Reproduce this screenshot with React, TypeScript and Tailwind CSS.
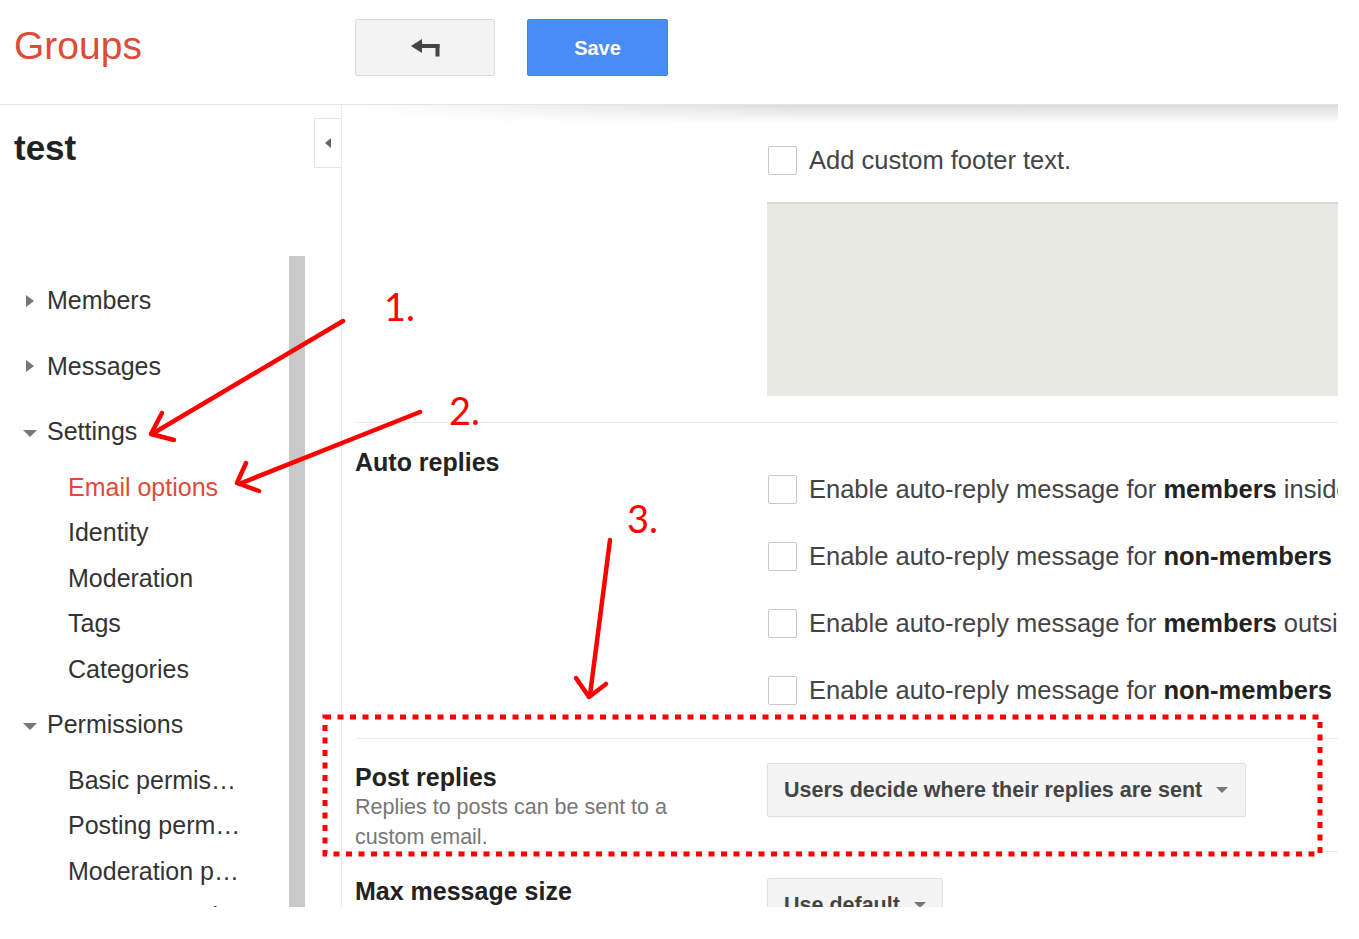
import React from "react";

function RightTri() {
  return (
    <svg width="8" height="12" viewBox="0 0 8 12" className="shrink-0">
      <polygon points="0,0 8,6 0,12" fill="#777" />
    </svg>
  );
}

function DownTri() {
  return (
    <svg width="14" height="7" viewBox="0 0 14 7" className="shrink-0 mt-[3px]">
      <polygon points="0,0 14,0 7,7" fill="#777" />
    </svg>
  );
}

function Caret() {
  return (
    <svg width="12" height="6" viewBox="0 0 12 6" className="shrink-0">
      <polygon points="0,0 12,0 6,6" fill="#777" />
    </svg>
  );
}

function Checkbox() {
  return <div className="ml-[1px] h-[29px] w-[29px] shrink-0 rounded-[2px] border border-[#c8c8c8] bg-white" />;
}

function TopItem({ label, open }: { label: string; open?: boolean }) {
  return (
    <div className={`flex h-[65.5px] items-center ${open ? "pl-[23px] gap-[10px]" : "pl-[26px] gap-[13px]"}`}>
      {open ? <DownTri /> : <RightTri />}
      <span className="text-[25px] text-[#333] whitespace-nowrap">{label}</span>
    </div>
  );
}

function SubItem({ label, active }: { label: string; active?: boolean }) {
  return (
    <div className="flex h-[45.5px] items-center pl-[68px]">
      <span className={`text-[25px] whitespace-nowrap ${active ? "text-[#dd4b39]" : "text-[#333]"}`}>{label}</span>
    </div>
  );
}

function AutoRow({ pre, bold, post }: { pre: string; bold: string; post: string }) {
  return (
    <div className="flex h-[67px] items-center gap-[12px] whitespace-nowrap">
      <Checkbox />
      <span className="text-[25.5px] text-[#444]">
        {pre}
        <b className="font-bold text-[#222]">{bold}</b>
        {post}
      </span>
    </div>
  );
}

export default function App() {
  return (
    <div className="h-[939px] w-[1359px] overflow-hidden bg-white font-['Liberation_Sans',Arial,sans-serif]">
      <div className="relative flex h-[907px] w-[1338px] flex-col overflow-hidden bg-white">
        {/* Header */}
        <header className="flex h-[105px] shrink-0 border-b border-[#e5e5e5]">
          <div className="w-[355px] pl-[14px] pt-[26px]">
            <span className="text-[39px] leading-none text-[#dd4b39]">Groups</span>
          </div>
          <div className="flex gap-[32px] pt-[19px]">
            <button className="flex h-[57px] w-[140px] items-center justify-center rounded-[2px] border border-[#dcdcdc] bg-[#f3f3f3]">
              <svg width="29" height="18" viewBox="0 0 29 18">
                <polygon points="0,7 11,0 11,14" fill="#444" />
                <rect x="10" y="5" width="18.5" height="4" fill="#444" />
                <rect x="24.5" y="5" width="4" height="12.5" fill="#444" />
              </svg>
            </button>
            <button className="flex h-[57px] w-[141px] items-center justify-center rounded-[2px] border border-[#3f83ee] bg-[#4a8cf6] text-[20px] font-bold text-white">
              Save
            </button>
          </div>
        </header>

        <div className="flex min-h-0 flex-1">
          {/* Sidebar */}
          <aside className="flex w-[342px] shrink-0 flex-col overflow-hidden border-r border-[#ebebeb]">
            <div className="flex h-[151px] shrink-0 items-start justify-between">
              <div className="pl-[14px] pt-[25px] text-[35px] font-bold leading-none text-[#222]">test</div>
              <div className="mt-[13px] -mr-[1px] flex h-[50px] w-[28px] items-center justify-center border border-[#e5e5e5] bg-white">
                <svg width="6" height="10" viewBox="0 0 6 10">
                  <polygon points="6,0 0,5 6,10" fill="#666" />
                </svg>
              </div>
            </div>
            <div className="flex min-h-0 flex-1">
              <nav className="w-[289px] shrink-0 overflow-hidden pt-[12px]">
                <TopItem label="Members" />
                <TopItem label="Messages" />
                <TopItem label="Settings" open />
                <SubItem label="Email options" active />
                <SubItem label="Identity" />
                <SubItem label="Moderation" />
                <SubItem label="Tags" />
                <SubItem label="Categories" />
                <TopItem label="Permissions" open />
                <SubItem label="Basic permis…" />
                <SubItem label="Posting perm…" />
                <SubItem label="Moderation p…" />
                <SubItem label="Access permi…" />
              </nav>
              <div className="w-[16px] shrink-0 bg-[#c9c9c9]" />
            </div>
          </aside>

          {/* Main */}
          <main className="relative min-w-0 flex-1 overflow-hidden pl-[13px]">
            <div className="pointer-events-none absolute inset-x-0 top-0 h-[18px] bg-gradient-to-b from-[#dcdcdc] to-transparent [mask-image:linear-gradient(to_right,transparent,black_45%)]" />

            {/* Footer text section */}
            <section className="flex pb-[26px]">
              <div className="w-[412px] shrink-0" />
              <div className="min-w-0 flex-1 pt-[40px]">
                <div className="flex h-[30px] items-center gap-[12px] whitespace-nowrap">
                  <Checkbox />
                  <span className="text-[25.5px] text-[#444]">Add custom footer text.</span>
                </div>
                <div className="mt-[27px] h-[194px] border-t-2 border-[#d8d8d2] bg-[#e9e9e3]" />
              </div>
            </section>

            {/* Auto replies */}
            <section className="flex border-t border-[#ebebeb] pb-[14px]">
              <div className="w-[412px] shrink-0 pt-[24px]">
                <h2 className="text-[25px] font-bold leading-[30px] text-[#222]">Auto replies</h2>
              </div>
              <div className="min-w-0 flex-1 pt-[33px]">
                <AutoRow pre="Enable auto-reply message for " bold="members" post=" inside the domain" />
                <AutoRow pre="Enable auto-reply message for " bold="non-members" post=" inside the domain" />
                <AutoRow pre="Enable auto-reply message for " bold="members" post=" outside the domain" />
                <AutoRow pre="Enable auto-reply message for " bold="non-members" post=" outside the domain" />
              </div>
            </section>

            {/* Post replies */}
            <section className="flex h-[113px] border-t border-[#ebebeb]">
              <div className="w-[412px] shrink-0 pt-[23px]">
                <h2 className="text-[25px] font-bold leading-[30px] text-[#222]">Post replies</h2>
                <p className="w-[340px] text-[21.5px] leading-[30px] text-[#777]">
                  Replies to posts can be sent to a custom email.
                </p>
              </div>
              <div className="min-w-0 flex-1 pt-[24px]">
                <div className="flex h-[54px] w-[479px] items-center gap-[14px] rounded-[2px] border border-[#e0e0e0] bg-[#f4f4f4] pl-[16px]">
                  <span className="whitespace-nowrap text-[21.5px] font-bold text-[#444]">Users decide where their replies are sent</span>
                  <Caret />
                </div>
              </div>
            </section>

            {/* Max message size */}
            <section className="flex border-t border-[#ebebeb]">
              <div className="w-[412px] shrink-0 pt-[24px]">
                <h2 className="text-[25px] font-bold leading-[30px] text-[#222]">Max message size</h2>
              </div>
              <div className="min-w-0 flex-1 pt-[26px]">
                <div className="flex h-[54px] w-[176px] items-center gap-[14px] rounded-[2px] border border-[#e0e0e0] bg-[#f4f4f4] pl-[16px]">
                  <span className="whitespace-nowrap text-[21.5px] font-bold text-[#444]">Use default</span>
                  <Caret />
                </div>
              </div>
            </section>
          </main>
        </div>

        {/* Annotation overlay */}
        <svg className="pointer-events-none absolute inset-0" width="1338" height="907" viewBox="0 0 1338 907">
          <g stroke="#ff0000" strokeWidth="4.5" fill="none" strokeLinecap="round" strokeLinejoin="round">
            <line x1="343" y1="321" x2="152" y2="434" />
            <polyline points="162,413 151,434 174,440" />
            <line x1="420" y1="412" x2="239" y2="484" />
            <polyline points="246,463 237,483 259,491" />
            <line x1="610" y1="540" x2="590" y2="695" />
            <polyline points="576,678 589,697 606,684" />
          </g>
          <rect x="325" y="717" width="995" height="137" fill="none" stroke="#ff0000" strokeWidth="5" strokeDasharray="6 6.5" />
        </svg>
        <div className="pointer-events-none absolute left-[384px] top-[287px] font-['Lato',sans-serif] text-[38px] leading-none text-[#ff0000]">1.</div>
        <div className="pointer-events-none absolute left-[449px] top-[391px] font-['Lato',sans-serif] text-[38px] leading-none text-[#ff0000]">2.</div>
        <div className="pointer-events-none absolute left-[627px] top-[499px] font-['Lato',sans-serif] text-[38px] leading-none text-[#ff0000]">3.</div>
      </div>
    </div>
  );
}
